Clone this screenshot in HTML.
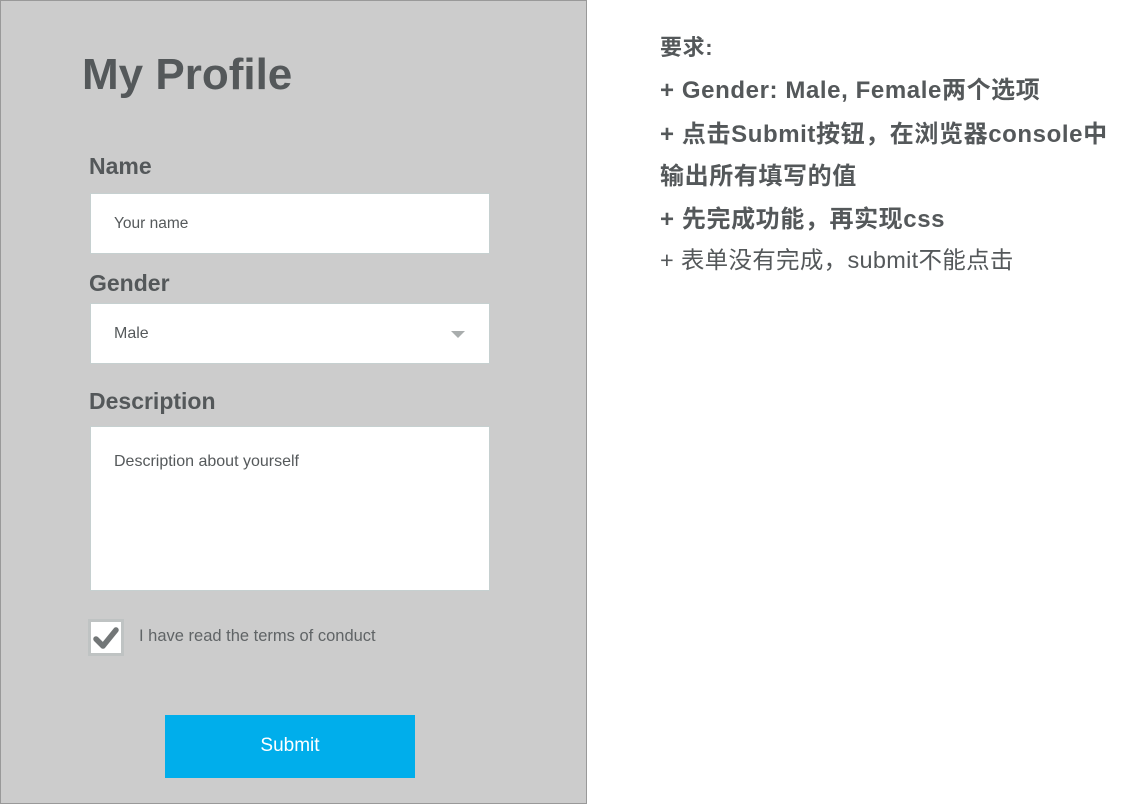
<!DOCTYPE html>
<html><head><meta charset="utf-8"><style>
*{margin:0;padding:0;box-sizing:border-box}
body{width:1127px;height:804px;background:#fff;position:relative;overflow:hidden;font-family:"Liberation Sans","Noto Sans CJK SC",sans-serif;color:#54585a}
.panel{position:absolute;left:0;top:0;width:587px;height:804px;background:#cccccc;border:1px solid #999}
.a{position:absolute}
h1{position:absolute;left:82px;top:50px;font-size:44px;font-weight:bold;color:#54585a}
.lbl{position:absolute;left:89px;font-size:23px;font-weight:bold;color:#54585a}
.box{position:absolute;left:90px;width:400px;background:#fff;border:1px solid #c6d0d0;font-size:16px;color:#55595b;padding-left:23px}
.r{position:absolute;left:660px;font-size:24px;font-weight:bold;color:#54585a;white-space:nowrap;letter-spacing:0.6px}
</style></head><body>
<div class="panel"></div>
<h1>My Profile</h1>
<div class="lbl" style="top:153px">Name</div>
<div class="box" style="top:193px;height:61px;line-height:59px;font-size:15.5px">Your name</div>
<div class="lbl" style="top:270px">Gender</div>
<div class="box" style="top:303px;height:61px;line-height:59px">Male
<div class="a" style="left:360px;top:27px;width:0;height:0;border-left:7px solid transparent;border-right:7px solid transparent;border-top:7px solid #a9adad"></div></div>
<div class="lbl" style="top:388px">Description</div>
<div class="box" style="top:426px;height:165px;padding-top:26px">Description about yourself</div>
<div class="a" style="left:88px;top:619px;width:36px;height:37px;background:#fff;border:3px solid #bfc3c3">
<svg width="30" height="31" viewBox="0 0 30 31" style="position:absolute;left:0;top:0"><path d="M5 17 L12 24 L25 8" fill="none" stroke="#727677" stroke-width="5.5" stroke-linecap="round" stroke-linejoin="round"/></svg></div>
<div class="a" style="left:139px;top:627px;font-size:16.5px;color:#606466">I have read the terms of conduct</div>
<div class="a" style="left:165px;top:715px;width:250px;height:63px;background:#00aeeb;color:#fff;font-size:19px;text-align:center;line-height:61px">Submit</div>
<div class="r" style="top:30px;font-size:22px">要求:</div>
<div class="r" style="top:70px">+ Gender: Male, Female两个选项</div>
<div class="r" style="top:114px">+ 点击Submit按钮，在浏览器console中</div>
<div class="r" style="top:156px">输出所有填写的值</div>
<div class="r" style="top:199px">+ 先完成功能，再实现css</div>
<div class="r" style="top:241px;font-weight:normal;font-size:23.5px;letter-spacing:0.3px">+ 表单没有完成，submit不能点击</div>
</body></html>
